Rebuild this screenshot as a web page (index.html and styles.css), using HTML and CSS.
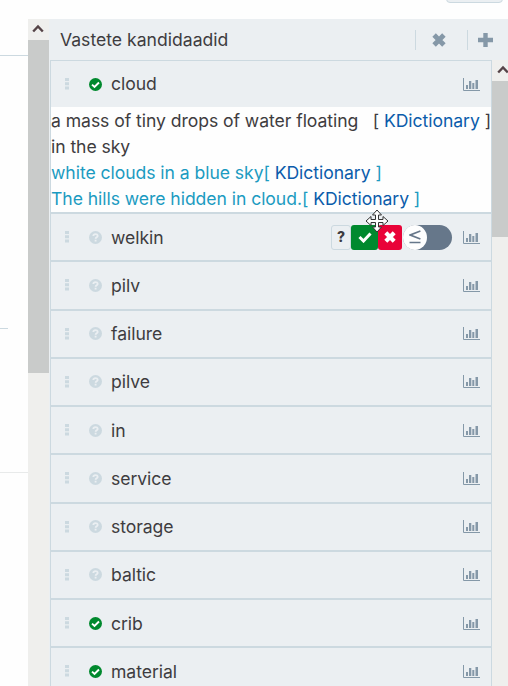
FILE: index.html
```html
<!DOCTYPE html>
<html lang="et">
<head>
<meta charset="utf-8">
<title>Vastete kandidaadid</title>
<link rel="stylesheet" href="styles.css">
</head>
<body>
<svg class="defs" width="0" height="0">
  <symbol id="dots" viewBox="0 0 4 12"><path d="M0 0h4v3H0zM0 4.2h4v3H0zM0 8.4h4v3H0z" fill="#ccd9e0"/></symbol>
  <symbol id="ok" viewBox="0 0 12 12"><circle cx="6" cy="6" r="6" fill="#00892e"/><path d="M2.8 6.1l2.3 2.2 4.1-4.1" fill="none" stroke="#fff" stroke-width="1.8"/></symbol>
  <symbol id="unknown" viewBox="0 0 12 12"><circle cx="6" cy="6" r="6" fill="#ccd9e0"/><path d="M4 4.6C4.1 2.3 8 2.3 8 4.5 8 5.8 6.1 5.7 6.1 7.2M6.1 8v1.7" fill="none" stroke="#ebeff2" stroke-width="1.7"/></symbol>
  <symbol id="chart" viewBox="0 0 17 13"><path d="M.5 0v12.5H17" fill="none" stroke="#8498a8" stroke-width="1"/><path d="M3 7h2v4H3zM6 3h2.300v8H6zM9.300 5h2v6h-2zM12.500 2h2.500v9h-2.500z" fill="#8598a8"/></symbol>
  <symbol id="cross" viewBox="0 0 12 12"><path d="M1.8 1.8l8.4 8.4M10.2 1.8l-8.4 8.4" stroke="currentColor" stroke-width="4.2"/></symbol>
  <symbol id="up" viewBox="0 0 12 9"><path d="M1.2 7.5L6 2.4l4.8 5.1" fill="none" stroke="#554347" stroke-width="2.4"/></symbol>
</svg>
<div class="page">
  <div class="left"><i class="l1"></i><i class="l2"></i><i class="l3"></i></div>
  <div class="bar outer"><div class="arrow"><svg width="12" height="9"><use href="#up"/></svg></div><div class="thumb"></div></div>
  <main class="panel">
    <header class="head">
      <h1>Vastete kandidaadid</h1>
      <span class="tool close"><svg width="14" height="14"><use href="#cross"/></svg></span>
      <span class="tool add"><svg width="15" height="14" viewBox="0 0 15 14"><path d="M7.5 0v14M0 7h15" stroke="#8598a8" stroke-width="4.4"/></svg></span>
    </header>
    <div class="body">
      <div class="list">
        <div class="row first"><svg class="dots"><use href="#dots"/></svg><svg class="state"><use href="#ok"/></svg><span class="word">cloud</span><svg class="chart"><use href="#chart"/></svg></div>
        <div class="detail">
          <div class="def"><span class="meaning">a mass of tiny drops of water floating in the sky</span><span class="src">[ <a>KDictionary</a> ]</span></div>
          <div class="example">white clouds in a blue sky[ <a>KDictionary</a> ]</div>
          <div class="example">The hills were hidden in cloud.[ <a>KDictionary</a> ]</div>
        </div>
        <div class="row"><svg class="dots"><use href="#dots"/></svg><svg class="state"><use href="#unknown"/></svg><span class="word">welkin</span>
          <span class="actions"><b class="q">?</b><b class="yes"><svg width="14" height="12" viewBox="0 0 14 12"><path d="M1.5 6l4 4L12.5 2.5" fill="none" stroke="#fff" stroke-width="3"/></svg></b><b class="no"><svg width="12" height="12"><use href="#cross"/></svg></b><span class="switch"><span class="knob"><svg width="12" height="14" viewBox="0 0 12 14"><path d="M11.4 1L1.3 5l10.1 4M.5 12.5h11" fill="none" stroke="#66778a" stroke-width="1.7"/></svg></span></span></span>
          <svg class="chart"><use href="#chart"/></svg>
          <svg class="cursor" width="24" height="24" viewBox="0 0 24 24"><path d="M12 1l4.500 5h-3v4.500h4.500v-3l5 4.500-5 4.500v-3h-4.500v4.500h3L12 23l-4.500-5h3v-4.500H6v3L1 12l5-4.500v3h4.500V6h-3z" fill="#fff" stroke="#333" stroke-width="1"/></svg>
        </div>
        <div class="row"><svg class="dots"><use href="#dots"/></svg><svg class="state"><use href="#unknown"/></svg><span class="word">pilv</span><svg class="chart"><use href="#chart"/></svg></div>
        <div class="row"><svg class="dots"><use href="#dots"/></svg><svg class="state"><use href="#unknown"/></svg><span class="word">failure</span><svg class="chart"><use href="#chart"/></svg></div>
        <div class="row"><svg class="dots"><use href="#dots"/></svg><svg class="state"><use href="#unknown"/></svg><span class="word">pilve</span><svg class="chart"><use href="#chart"/></svg></div>
        <div class="row"><svg class="dots"><use href="#dots"/></svg><svg class="state"><use href="#unknown"/></svg><span class="word">in</span><svg class="chart"><use href="#chart"/></svg></div>
        <div class="row"><svg class="dots"><use href="#dots"/></svg><svg class="state"><use href="#unknown"/></svg><span class="word">service</span><svg class="chart"><use href="#chart"/></svg></div>
        <div class="row"><svg class="dots"><use href="#dots"/></svg><svg class="state"><use href="#unknown"/></svg><span class="word">storage</span><svg class="chart"><use href="#chart"/></svg></div>
        <div class="row"><svg class="dots"><use href="#dots"/></svg><svg class="state"><use href="#unknown"/></svg><span class="word">baltic</span><svg class="chart"><use href="#chart"/></svg></div>
        <div class="row"><svg class="dots"><use href="#dots"/></svg><svg class="state"><use href="#ok"/></svg><span class="word">crib</span><svg class="chart"><use href="#chart"/></svg></div>
        <div class="row"><svg class="dots"><use href="#dots"/></svg><svg class="state"><use href="#ok"/></svg><span class="word">material</span><svg class="chart"><use href="#chart"/></svg></div>
      </div>
      <div class="bar inner"><div class="arrow"><svg width="12" height="9"><use href="#up"/></svg></div><div class="thumb"></div></div>
    </div>
  </main>
</div>
<div class="topbutton"></div>
</body>
</html>
```
FILE: styles.css
```css
* { box-sizing: border-box; }
body {
  margin: 0;
  width: 508px;
  height: 686px;
  overflow: hidden;
  background: #fefefe;
  color: #3e3c40;
  font: 17.6px/26px Inter, "Liberation Sans", sans-serif;
}
svg { display: block; flex: none; }
.defs { position: absolute; }
.page { display: flex; height: 686px; padding-top: 19px; }
.left { width: 28px; flex: none; }
.left i { display: block; height: 1px; background: #ccd9e0; }
.left .l1 { margin-top: 36px; }
.left .l2 { margin-top: 272px; width: 8px; }
.left .l3 { margin-top: 143px; background: #e8eaea; }
.bar { background: #efefed; flex: none; overflow: hidden; }
.bar .thumb { background: #c9cbca; }
.arrow { height: 21px; display: flex; justify-content: center; padding-top: 5px; }
.outer { width: 21px; }
.outer .arrow { padding-right: 1px; }
.outer .thumb { height: 333px; }
.inner { width: 16px; }
.inner .arrow { justify-content: flex-start; padding-left: 5px; }
.inner .thumb { height: 156px; }
.panel { flex: 1; min-width: 0; background: #ebeff2; padding-left: 1px; }
.head { display: flex; align-items: center; height: 41px; padding-left: 10px; }
.head h1 { margin: 0; flex: 1; font-size: 17.6px; font-weight: 400; white-space: nowrap; }
.tool { height: 20px; display: flex; align-items: center; border-left: 1px solid #ccd9e0; color: #8598a8; }
.close { width: 52px; padding: 1px 0 0 16px; }
.add { width: 41px; padding-left: 10px; }
.body { display: flex; height: 626px; overflow: hidden; }
.list { width: 442px; flex: none; border: 1px solid #ccd9e0; border-bottom: 0; letter-spacing: -0.06px; }
.row { position: relative; display: flex; align-items: center; height: 48.25px; border-top: 2px solid #ccd9e0; padding: 0 11px 0 14px; }
.row.first { height: 46px; border-top: 0; }
.dots { width: 4px; height: 12px; margin-right: 20px; }
.state { width: 13px; height: 13px; margin-right: 9px; }
.word { flex: 1; padding-top: 1px; }
.row.first .word { padding-top: 0; }
.chart { width: 17px; height: 13px; }
.detail { height: 105px; background: #fefefe; white-space: nowrap; }
.detail a { color: #0b5cab; }
.def { display: flex; justify-content: space-between; height: 53px; padding-top: 1px; }
.meaning { width: 318px; white-space: normal; }
.example { color: #1b9bc1; }
.actions { display: flex; align-items: center; margin-right: 11px; }
.actions b { height: 25px; display: flex; align-items: center; justify-content: center; }
.q { width: 20px; border: 1px solid #ccd9e0; border-radius: 3px; font-size: 14px; font-weight: 800; }
.yes { width: 27px; background: #00892e; border-radius: 3px; }
.no { width: 24px; background: #e90338; color: #fff; border-radius: 3px; }
.switch { width: 49px; height: 25px; margin-left: 1px; border-radius: 13px; background: #66778a; }
.knob { width: 24px; height: 25px; border-radius: 50%; background: #fefefe; display: flex; align-items: center; justify-content: center; }
.cursor { position: absolute; left: 314px; top: -5px; }
.topbutton { position: absolute; left: 446px; top: -20px; width: 57px; height: 23px; border: 1px solid #ccd9e0; border-radius: 4px; background: #ebeff2; }
```
